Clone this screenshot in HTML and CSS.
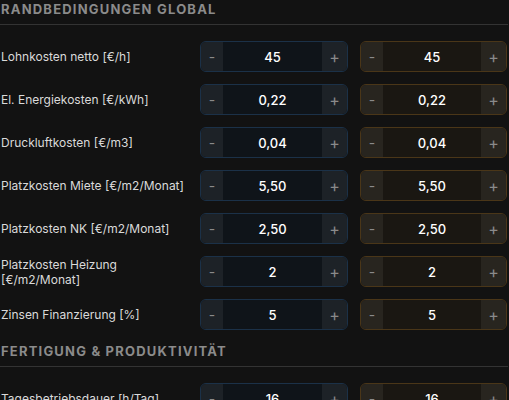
FILE: index.html
```html
<!DOCTYPE html>
<html lang="de">
<head>
<meta charset="utf-8">
<title>Randbedingungen</title>
<link rel="stylesheet" href="styles.css">
</head>
<body>
<main class="page">
  <section class="section">
    <h2 class="section-title">Randbedingungen global</h2>
    <div class="rows">
      <div class="row">
        <span class="label">Lohnkosten netto [€/h]</span>
        <div class="stepper stepper-a"><button class="btn minus">-</button><span class="value">45</span><button class="btn plus">+</button></div>
        <div class="stepper stepper-b"><button class="btn minus">-</button><span class="value">45</span><button class="btn plus">+</button></div>
      </div>
      <div class="row">
        <span class="label">El. Energiekosten [€/kWh]</span>
        <div class="stepper stepper-a"><button class="btn minus">-</button><span class="value">0,22</span><button class="btn plus">+</button></div>
        <div class="stepper stepper-b"><button class="btn minus">-</button><span class="value">0,22</span><button class="btn plus">+</button></div>
      </div>
      <div class="row">
        <span class="label">Druckluftkosten [€/m3]</span>
        <div class="stepper stepper-a"><button class="btn minus">-</button><span class="value">0,04</span><button class="btn plus">+</button></div>
        <div class="stepper stepper-b"><button class="btn minus">-</button><span class="value">0,04</span><button class="btn plus">+</button></div>
      </div>
      <div class="row">
        <span class="label">Platzkosten Miete [€/m2/Monat]</span>
        <div class="stepper stepper-a"><button class="btn minus">-</button><span class="value">5,50</span><button class="btn plus">+</button></div>
        <div class="stepper stepper-b"><button class="btn minus">-</button><span class="value">5,50</span><button class="btn plus">+</button></div>
      </div>
      <div class="row">
        <span class="label">Platzkosten NK [€/m2/Monat]</span>
        <div class="stepper stepper-a"><button class="btn minus">-</button><span class="value">2,50</span><button class="btn plus">+</button></div>
        <div class="stepper stepper-b"><button class="btn minus">-</button><span class="value">2,50</span><button class="btn plus">+</button></div>
      </div>
      <div class="row">
        <span class="label">Platzkosten Heizung [€/m2/Monat]</span>
        <div class="stepper stepper-a"><button class="btn minus">-</button><span class="value">2</span><button class="btn plus">+</button></div>
        <div class="stepper stepper-b"><button class="btn minus">-</button><span class="value">2</span><button class="btn plus">+</button></div>
      </div>
      <div class="row">
        <span class="label">Zinsen Finanzierung [%]</span>
        <div class="stepper stepper-a"><button class="btn minus">-</button><span class="value">5</span><button class="btn plus">+</button></div>
        <div class="stepper stepper-b"><button class="btn minus">-</button><span class="value">5</span><button class="btn plus">+</button></div>
      </div>
    </div>
  </section>
  <section class="section">
    <h2 class="section-title">Fertigung &amp; Produktivität</h2>
    <div class="rows">
      <div class="row">
        <span class="label">Tagesbetriebsdauer [h/Tag]</span>
        <div class="stepper stepper-a"><button class="btn minus">-</button><span class="value">16</span><button class="btn plus">+</button></div>
        <div class="stepper stepper-b"><button class="btn minus">-</button><span class="value">16</span><button class="btn plus">+</button></div>
      </div>
    </div>
  </section>
</main>
</body>
</html>
```
FILE: styles.css
```css
html, body {
  margin: 0;
  padding: 0;
  background: #121212;
  overflow: hidden;
}

.page {
  width: 508px;
  padding: 1px 0 0 1px;
  box-sizing: border-box;
  font-family: Inter, "Noto Sans", sans-serif;
  color: #dcdcdc;
}

.section + .section {
  margin-top: 13px;
}

.section-title {
  margin: 0 0 0 -1px;
  padding: 0 0 7px 1px;
  font-size: 13px;
  line-height: 16px;
  font-weight: 700;
  letter-spacing: 1.2px;
  text-transform: uppercase;
  color: #8b8b8b;
  border-bottom: 1px solid #333333;
}

.rows {
  display: flex;
  flex-direction: column;
  gap: 12px;
  margin-top: 16px;
}

.row {
  display: grid;
  grid-template-columns: 187px 148px 147px;
  column-gap: 12px;
  align-items: center;
  height: 31px;
}

.label {
  font-size: 12px;
  line-height: 15px;
  color: #dadada;
}

.stepper {
  display: flex;
  height: 31px;
  box-sizing: border-box;
  border-radius: 6px;
  overflow: hidden;
  border: 1px solid;
}

.stepper-a {
  border-color: #1b3148;
  background: #0f1419;
}

.stepper-b {
  border-color: #4a3618;
  background: #1a1712;
}

.btn {
  border: 0;
  padding: 0;
  margin: 0;
  font-family: Inter, "Noto Sans", sans-serif;
  font-size: 16px;
  color: #8a8a8a;
  display: flex;
  align-items: center;
  justify-content: center;
}

.stepper-a .btn {
  background: #1d2227;
}

.stepper-b .btn {
  background: #28251f;
}

.minus {
  width: 22px;
  font-size: 14px;
}

.plus {
  width: 25px;
}

.value {
  flex: 1;
  display: flex;
  align-items: center;
  justify-content: center;
  font-size: 13px;
  font-weight: 500;
  color: #ffffff;
}
```
